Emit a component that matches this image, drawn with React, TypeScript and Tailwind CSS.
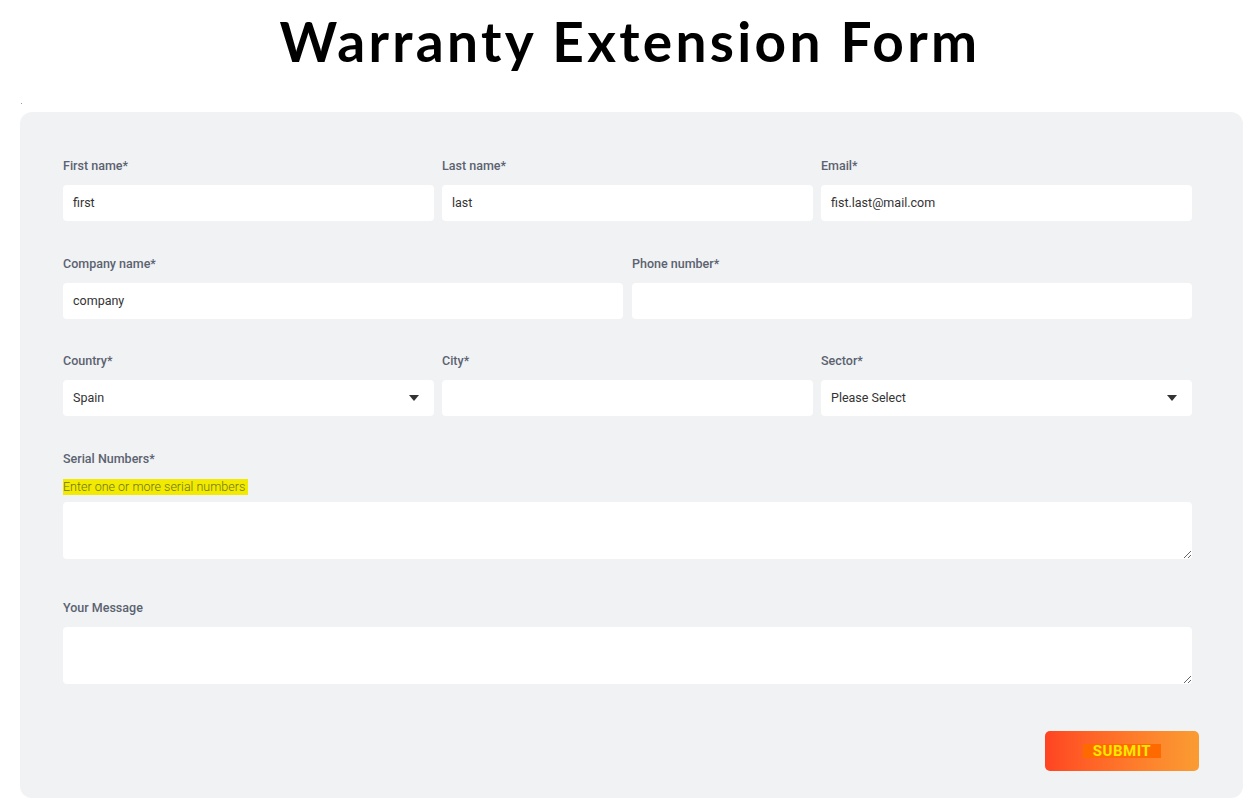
import React from "react";

const labelCls =
  "block h-5 leading-5 text-[12.5px] font-medium text-[#5b6270] mt-px mb-[9px]";
const inputCls =
  "block w-full h-9 rounded-[4px] bg-white px-[10px] text-[12.5px] text-[#333] outline-none border-0";

function Arrow() {
  return (
    <svg width="10" height="6" viewBox="0 0 10 6" className="absolute right-[15px] top-[15px]">
      <path d="M0 0 L10 0 L5 6 Z" fill="#333" />
    </svg>
  );
}

function Field({ label, value, select }: { label: string; value?: string; select?: boolean }) {
  return (
    <div>
      <label className={labelCls}>{label}</label>
      <div className="relative">
        <div className={inputCls + " flex items-center"}>{value}</div>
        {select && <Arrow />}
      </div>
    </div>
  );
}

export default function App() {
  return (
    <div
      className="w-[1260px] h-[811px] bg-white overflow-hidden"
      style={{ fontFamily: "Roboto, 'Liberation Sans', sans-serif" }}
    >
      <h1
        className="h-[86px] pt-[6px] text-center text-[55px] leading-[70px] font-bold text-black tracking-[3.3px]"
        style={{ fontFamily: "Lato, 'Liberation Sans', sans-serif" }}
      >
        Warranty Extension Form
      </h1>
      <div className="h-[26px] pl-[21px] pt-[17px]">
        <div className="w-px h-px bg-[#999]" />
      </div>
      <div className="ml-[20px] w-[1223px] h-[686px] rounded-[12px] bg-[#f1f2f4] pl-[43px] pr-[51px] pt-[43px]">
        <div className="grid grid-cols-3 gap-x-[8px] mb-[32px]">
          <Field label="First name*" value="first" />
          <Field label="Last name*" value="last" />
          <Field label="Email*" value="fist.last@mail.com" />
        </div>
        <div className="grid grid-cols-2 gap-x-[9px] mb-[31px]">
          <Field label="Company name*" value="company" />
          <Field label="Phone number*" />
        </div>
        <div className="grid grid-cols-3 gap-x-[8px] mb-[33px]">
          <Field label="Country*" value="Spain" select />
          <Field label="City*" />
          <Field label="Sector*" value="Please Select" select />
        </div>
        <div className="mb-[39px]">
          <label className={labelCls}>Serial Numbers*</label>
          <div className="mb-[8px] h-4 leading-4">
            <span className="inline-block h-4 leading-4 bg-[#f2ea00] text-[12.5px] font-light text-[#6e7418] pr-[3px]">
              Enter one or more serial numbers
            </span>
          </div>
          <textarea className="block w-full h-[57px] rounded-[4px] bg-white outline-none border-0 resize-y p-[10px] text-[13px]" />
        </div>
        <div>
          <label className="block h-5 leading-5 text-[12.5px] font-medium text-[#5b6270] mb-[9px]">
            Your Message
          </label>
          <textarea className="block w-full h-[57px] rounded-[4px] bg-white outline-none border-0 resize-y p-[10px] text-[13px]" />
        </div>
        <div className="flex justify-end mt-[47px] -mr-[7px]">
          <button className="w-[154px] h-[40px] rounded-[5px] bg-gradient-to-r from-[#ff4322] to-[#fa9c32] flex items-center justify-center">
            <span className="bg-[#ff6a00] px-[10px] h-[14px] leading-[14px] text-[15px] font-bold tracking-[0.5px] text-[#ffe800]">
              SUBMIT
            </span>
          </button>
        </div>
      </div>
    </div>
  );
}
